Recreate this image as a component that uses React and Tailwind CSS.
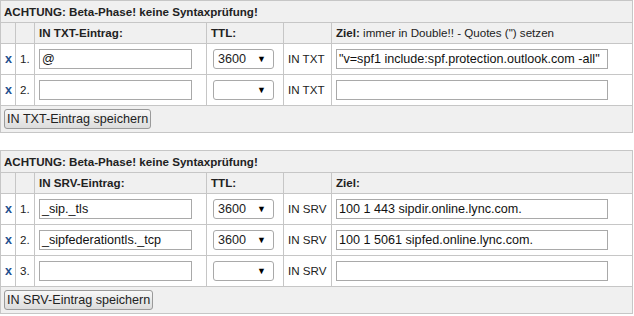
import React from "react";

const font = { fontFamily: '"Liberation Sans", Arial, sans-serif' };

function Select({ value }) {
  return (
    <div className="ml-[2px] flex h-[20px] w-[61px] items-center justify-between rounded-[3px] border border-[#a9a9a9] bg-white pl-[4px] pr-[7px] text-[12.6px] text-[#222]">
      <span>{value}</span>
      <span className="text-[9px] leading-none text-black">▼</span>
    </div>
  );
}

function Input({ value, w }) {
  return (
    <div
      className={`flex h-[20px] items-center border border-[#a9a9a9] bg-white pl-[2px] text-[12.6px] whitespace-nowrap overflow-hidden text-[#111] ${w}`}
    >
      {value}
    </div>
  );
}

function Table({ type, zielHeader, rows }) {
  const cell = "border border-[#c6c6c6] px-[4px] align-middle";
  return (
    <table className="w-[632px] table-fixed border-collapse text-[11.6px] text-[#222]" style={font}>
      <colgroup>
        <col className="w-[15px]" />
        <col className="w-[19px]" />
        <col className="w-[172px]" />
        <col className="w-[77px]" />
        <col className="w-[48px]" />
        <col className="w-[301px]" />
      </colgroup>
      <tbody>
        <tr className="h-[22px] bg-[#f0f0f0]">
          <td colSpan={6} className="border border-[#c6c6c6] px-[3px] font-bold">
            ACHTUNG: Beta-Phase! keine Syntaxprüfung!
          </td>
        </tr>
        <tr className="h-[21px] bg-[#f0f0f0]">
          <td className={cell}></td>
          <td className={cell}></td>
          <td className={`${cell} font-bold`}>IN {type}-Eintrag:</td>
          <td className={`${cell} font-bold`}>TTL:</td>
          <td className={cell}></td>
          <td className={cell}>{zielHeader}</td>
        </tr>
        {rows.map((r, i) => (
          <tr key={i} className="h-[31px] bg-white">
            <td className={`${cell} pl-[4px] pr-0 font-bold text-[#1f4f8f] text-[12.6px]`}>x</td>
            <td className={`${cell} pl-[4px] pr-0`}>{i + 1}.</td>
            <td className={cell}>
              <Input value={r.name} w="w-[153px]" />
            </td>
            <td className={cell}>
              <Select value={r.ttl} />
            </td>
            <td className={`${cell} whitespace-nowrap`}>IN {type}</td>
            <td className={cell}>
              <Input value={r.ziel} w="w-[272px]" />
            </td>
          </tr>
        ))}
        <tr className="h-[27px] bg-[#f0f0f0]">
          <td colSpan={6} className="border border-[#c6c6c6] px-[3px] align-middle">
            <button
              className="flex h-[20px] items-center rounded-[3px] border border-[#9a9a9a] bg-gradient-to-b from-[#f8f8f8] to-[#dcdcdc] px-[2px] text-[12.6px] text-[#222]"
              style={font}
            >
              IN {type}-Eintrag speichern
            </button>
          </td>
        </tr>
      </tbody>
    </table>
  );
}

export default function App() {
  return (
    <div className="h-[316px] w-[634px] bg-white" style={font}>
      <Table
        type="TXT"
        zielHeader={
          <span>
            <b>Ziel:</b> immer in Double!! - Quotes (") setzen
          </span>
        }
        rows={[
          { name: "@", ttl: "3600", ziel: '"v=spf1 include:spf.protection.outlook.com -all"' },
          { name: "", ttl: "", ziel: "" },
        ]}
      />
      <div className="h-[17px]" />
      <Table
        type="SRV"
        zielHeader={<b>Ziel:</b>}
        rows={[
          { name: "_sip._tls", ttl: "3600", ziel: "100 1 443 sipdir.online.lync.com." },
          { name: "_sipfederationtls._tcp", ttl: "3600", ziel: "100 1 5061 sipfed.online.lync.com." },
          { name: "", ttl: "", ziel: "" },
        ]}
      />
    </div>
  );
}
